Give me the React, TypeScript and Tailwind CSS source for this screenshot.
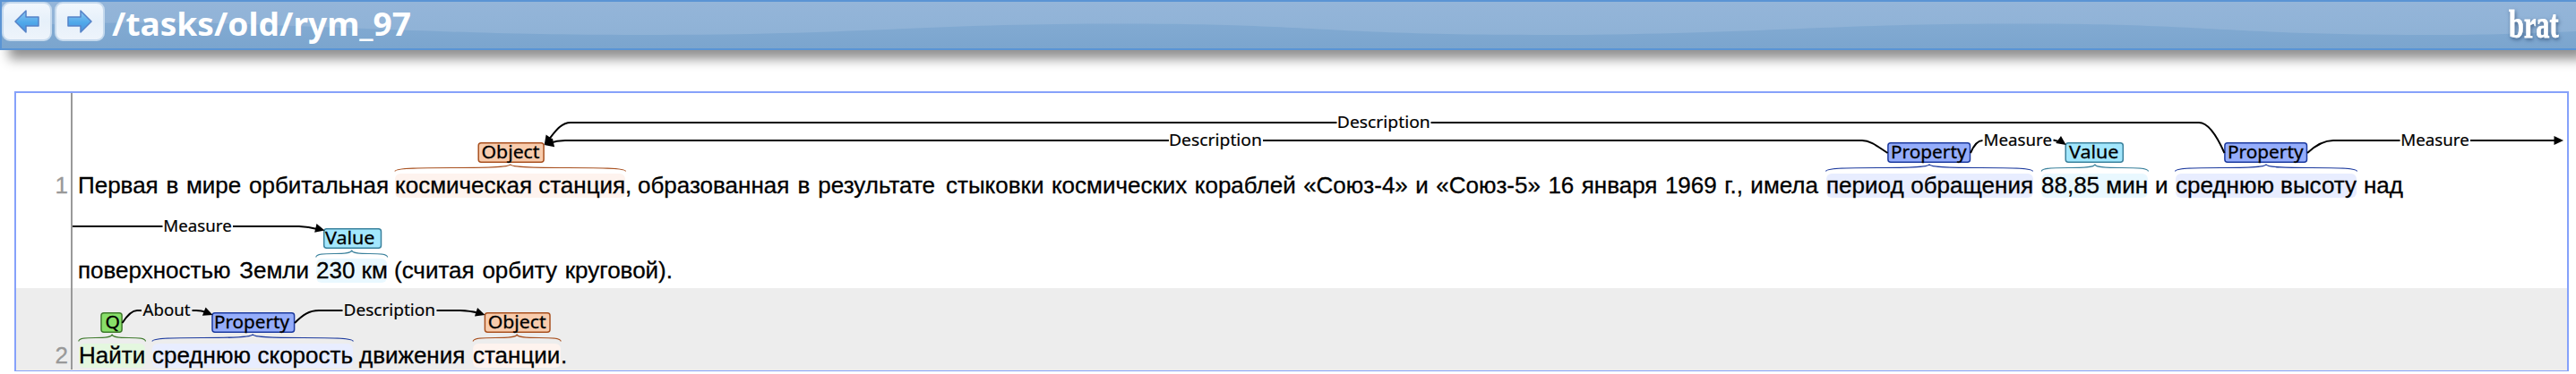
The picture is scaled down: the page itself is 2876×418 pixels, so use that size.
import React from "react";

type Kind = "object" | "property" | "value" | "question";

const TAG: Record<Kind, { fill: string; stroke: string; label: string }> = {
  object: { fill: "#f8ccad", stroke: "#a8501f", label: "Object" },
  property: { fill: "#95adfb", stroke: "#1c3a9e", label: "Property" },
  value: { fill: "#a3e7fd", stroke: "#3a819c", label: "Value" },
  question: { fill: "#88df69", stroke: "#3f7a2c", label: "Q" },
};

const MARK: Record<Kind, string> = {
  object: "bg-[#fef3ee]",
  property: "bg-[#e8edff]",
  value: "bg-[#e9f8ff]",
  question: "bg-[#e4f7df]",
};

interface Chunk {
  text: string;
  box: string;
  kind?: Kind;
}

const LINE_1: Chunk[] = [
  { text: "Первая в мире орбитальная", box: "ml-[6px] w-[347px]" },
  { text: "космическая станция", box: "ml-[7px] w-[257px]", kind: "object" },
  { text: ",", box: "w-[7px]" },
  { text: "образованная в результате", box: "ml-[7px] w-[332px]" },
  { text: "стыковки космических кораблей «Союз-4» и «Союз-5» 16 января 1969 г., имела", box: "ml-[12px] w-[974px]" },
  { text: "период обращения", box: "ml-[9px] w-[231px]", kind: "property" },
  { text: "88,85 мин", box: "ml-[9px] w-[119px]", kind: "value" },
  { text: "и", box: "ml-[8px] w-[15px]" },
  { text: "среднюю высоту", box: "ml-[8px] w-[202px]", kind: "property" },
  { text: "над", box: "ml-[8px]" },
];

const LINE_2: Chunk[] = [
  { text: "поверхностью Земли", box: "ml-[6px] w-[258px]" },
  { text: "230 км", box: "ml-[8px] w-[79px]", kind: "value" },
  { text: "(считая орбиту круговой).", box: "ml-[8px] w-[311px]" },
];

const LINE_3: Chunk[] = [
  { text: "Найти", box: "ml-[7px] w-[74px]", kind: "question" },
  { text: "среднюю скорость", box: "ml-[8px] w-[224px]", kind: "property" },
  { text: "движения", box: "ml-[7px] w-[119px]" },
  { text: "станции", box: "ml-[8px] w-[98px]", kind: "object" },
  { text: ".", box: "" },
];

function Line({ num, chunks }: { num?: string; chunks: Chunk[] }) {
  return (
    <div className="flex h-[27px] text-[26px] leading-[27px] whitespace-nowrap text-black [-webkit-text-stroke:0.3px_currentColor]">
      <span className="w-[58px] shrink-0 text-right text-[#999]">{num}</span>
      <span className="w-[5px] shrink-0" />
      {chunks.map((c, i) => (
        <span
          key={i}
          className={`block shrink-0 rounded-[6px] [text-align-last:justify] ${c.box} ${c.kind ? MARK[c.kind] : ""}`}
        >
          {c.text}
        </span>
      ))}
    </div>
  );
}

/** Entity tag: box plus its label. */
function Tag({ kind, x, y, w, tx, tw }: { kind: Kind; x: number; y: number; w: number; tx: number; tw: number }) {
  const t = TAG[kind];
  return (
    <g>
      <rect x={x + 0.7} y={y + 0.7} width={w - 1.4} height={21.6} rx={3} fill={t.fill} stroke={t.stroke} strokeWidth={1.5} />
      <text x={tx} y={y + 18} fontSize={20} textLength={tw} lengthAdjust="spacingAndGlyphs" fill="#000" stroke="#000" strokeWidth={0.3}>
        {t.label}
      </text>
    </g>
  );
}

function Brace({ kind, a, b, y }: { kind: Kind; a: number; b: number; y: number }) {
  const c = (a + b) / 2;
  return (
    <path
      d={`M${a},${y + 8} C${a},${y} ${c},${y + 8} ${c},${y} C${c},${y + 8} ${b},${y} ${b},${y + 8}`}
      fill="none"
      stroke={TAG[kind].stroke}
      strokeWidth={1.2}
    />
  );
}

function Head({ x, y, angle }: { x: number; y: number; angle: number }) {
  return <path d="M0,0 L-10.5,-5 L-10.5,5 Z" transform={`translate(${x} ${y}) rotate(${angle})`} fill="#000" />;
}

function ArcLabel({ x, y, w, children }: { x: number; y: number; w: number; children: string }) {
  return (
    <text x={x} y={y} fontSize={18.5} textLength={w} lengthAdjust="spacingAndGlyphs" fill="#000" stroke="#000" strokeWidth={0.2}>
      {children}
    </text>
  );
}

function Annotations() {
  return (
    <svg
      className="pointer-events-none absolute -top-[2px] -left-[2px] h-[313px] w-[2852px] font-['Noto_Sans',sans-serif]"
      viewBox="16 102 2852 313"
    >
      <Brace kind="object" a={441} b={698.5} y={183.5} />
      <Brace kind="property" a={2038.5} b={2269.5} y={183.5} />
      <Brace kind="value" a={2279.3} b={2398.5} y={183.5} />
      <Brace kind="property" a={2428.5} b={2631.5} y={183.5} />
      <Brace kind="value" a={352.8} b={432.6} y={279.5} />
      <Brace kind="question" a={87.8} b={162.5} y={373.5} />
      <Brace kind="property" a={170} b={394.3} y={373.5} />
      <Brace kind="object" a={528.2} b={626.2} y={373.5} />

      <Tag kind="object" x={533.5} y={159} w={74.3} tx={537.5} tw={65} />
      <Tag kind="property" x={2107.2} y={159} w={93} tx={2111} tw={84.5} />
      <Tag kind="value" x={2305.5} y={159} w={65.5} tx={2310} tw={55.5} />
      <Tag kind="property" x={2483.2} y={159} w={93} tx={2487} tw={84.5} />
      <Tag kind="value" x={361} y={255} w={65.2} tx={363} tw={55.5} />
      <Tag kind="question" x={112.3} y={349} w={24.5} tx={117.5} tw={16.5} />
      <Tag kind="property" x={236.3} y={349} w={93} tx={239} tw={84} />
      <Tag kind="object" x={540.7} y={349} w={74} tx={544.7} tw={65} />

      <g fill="none" stroke="#000" strokeWidth={2}>
        <path d="M1492.5,137 H637 C625,137 618,150 611,158" />
        <path d="M1597.5,137 H2455 C2466,137 2476,154 2483.5,171" />
        <path d="M1305,157 H631 Q622,157 613,160" />
        <path d="M1410,157 H2079 C2089,157 2098,165 2107.5,171" />
        <path d="M2200,171 Q2206,157 2213.5,157" />
        <path d="M2292.5,156.5 L2300,158.5" />
        <path d="M2576,171 Q2591,157 2605,157 H2679.5" />
        <path d="M2758,157 H2855" />
        <path d="M81,253 H181.5" />
        <path d="M260,253 H334 Q345,253.5 354,256" />
        <path d="M136.5,361 C143,351 149,347 153,347 H158" />
        <path d="M214.5,347 H219 Q225,347 230,349" />
        <path d="M329,361 C338,352 345,347 356,347 H382.5" />
        <path d="M487.5,347 H514 Q525,347.5 533,349.5" />
      </g>
      <Head x={607.7} y={162} angle={125} />
      <Head x={607.7} y={162} angle={166} />
      <Head x={2306.7} y={162} angle={35} />
      <Head x={2862} y={157} angle={0} />
      <Head x={362.5} y={257.5} angle={14} />
      <Head x={237.5} y={352} angle={22} />
      <Head x={541.5} y={352} angle={18} />

      <ArcLabel x={1492.8} y={143} w={104}>Description</ArcLabel>
      <ArcLabel x={1305} y={163} w={104}>Description</ArcLabel>
      <ArcLabel x={2214.5} y={163} w={76.5}>Measure</ArcLabel>
      <ArcLabel x={2680.2} y={163} w={76.5}>Measure</ArcLabel>
      <ArcLabel x={182.2} y={259} w={76.5}>Measure</ArcLabel>
      <ArcLabel x={159.5} y={353} w={53}>About</ArcLabel>
      <ArcLabel x={383.5} y={353} w={102.5}>Description</ArcLabel>
    </svg>
  );
}

function NavButton({ dir }: { dir: "left" | "right" }) {
  return (
    <button className="flex h-[44px] w-[56px] items-center justify-center rounded-[9px] border-2 border-[#c5d9ed] bg-linear-to-b from-[#f1f7fd] via-[#e6f0fa] to-[#eef4fb] pb-px">
      <svg className={dir === "left" ? "h-7 w-7" : "h-7 w-7 -scale-x-100"} viewBox="0 0 28 28">
        <defs>
          <linearGradient id={`arrow-${dir}`} x1="0" y1="0" x2="0" y2="1">
            <stop offset="0" stopColor="#8fc6f0" />
            <stop offset="0.55" stopColor="#4fa9ea" />
            <stop offset="1" stopColor="#4a90dc" />
          </linearGradient>
        </defs>
        <path
          d="M1,14 L13,2 V9 H27 V19 H13 V26 Z"
          fill={`url(#arrow-${dir})`}
          stroke="#5683c8"
          strokeWidth="1.5"
          strokeLinejoin="round"
        />
      </svg>
    </button>
  );
}

function Header() {
  return (
    <header className="relative h-[56px] border-2 border-r-0 border-[#5a94d4] bg-linear-to-b from-[#94b5d9] to-[#8db1d5] shadow-[10px_10px_12px_#909090]">
      <svg className="absolute inset-0 h-[52px] w-full" viewBox="2 2 2874 52" preserveAspectRatio="none">
        <defs>
          <linearGradient id="wave" x1="0" y1="0" x2="0" y2="1">
            <stop offset="0" stopColor="#82aad2" />
            <stop offset="1" stopColor="#7ba5ce" />
          </linearGradient>
        </defs>
        <path
          d="M2,29 C80,26 190,23 300,28 C450,33 550,39 712,39 C960,39 1030,26.5 1248,26.5 C1470,26.5 1480,39 1715,39 C1960,39 2030,26.5 2252,26.5 C2470,26.5 2480,39 2716,39 C2780,39 2830,37 2876,35 V54 H2 Z"
          fill="url(#wave)"
        />
      </svg>
      <div className="relative flex h-[52px] items-start justify-between">
        <div className="flex items-start">
          <div className="flex gap-[3px]">
            <NavButton dir="left" />
            <NavButton dir="right" />
          </div>
          <svg className="ml-[8px] h-[52px] w-[345px]" viewBox="125 2 345 52">
            <text
              x="125"
              y="40"
              fontSize="35"
              fontWeight="700"
              textLength="334"
              lengthAdjust="spacingAndGlyphs"
              fill="#fff"
              className="font-['Noto_Sans',sans-serif]"
            >
              /tasks/old/rym_97
            </text>
          </svg>
        </div>
        <svg
          className="h-[52px] w-[76px] overflow-visible drop-shadow-[1px_2px_2px_rgba(40,70,110,0.7)]"
          viewBox="2800 2 76 52"
        >
          <text
            transform="translate(2801 42) scale(0.69 1)"
            fontSize="44"
            fontWeight="700"
            fill="#fff"
            stroke="#fff"
            strokeWidth="0.8"
            className="font-['Liberation_Serif',serif]"
          >
            brat
          </text>
        </svg>
      </div>
    </header>
  );
}

export default function App() {
  return (
    <div className="h-[418px] w-[2876px] overflow-hidden bg-white font-['Liberation_Sans',sans-serif]">
      <Header />
      <main className="relative mt-[46px] ml-[16px] h-[313px] w-[2852px] border-2 border-b-[1.5px] border-[#86a1fa]">
        <section className="h-[218px] pt-[90px]">
          <Line num="1" chunks={LINE_1} />
          <div className="h-[68px]" />
          <Line chunks={LINE_2} />
        </section>
        <section className="h-[92px] bg-[#ededed] pt-[62px]">
          <Line num="2" chunks={LINE_3} />
        </section>
        <div className="absolute top-0 bottom-[1px] left-[61px] w-[2px] bg-[#999]" />
        <Annotations />
      </main>
    </div>
  );
}
